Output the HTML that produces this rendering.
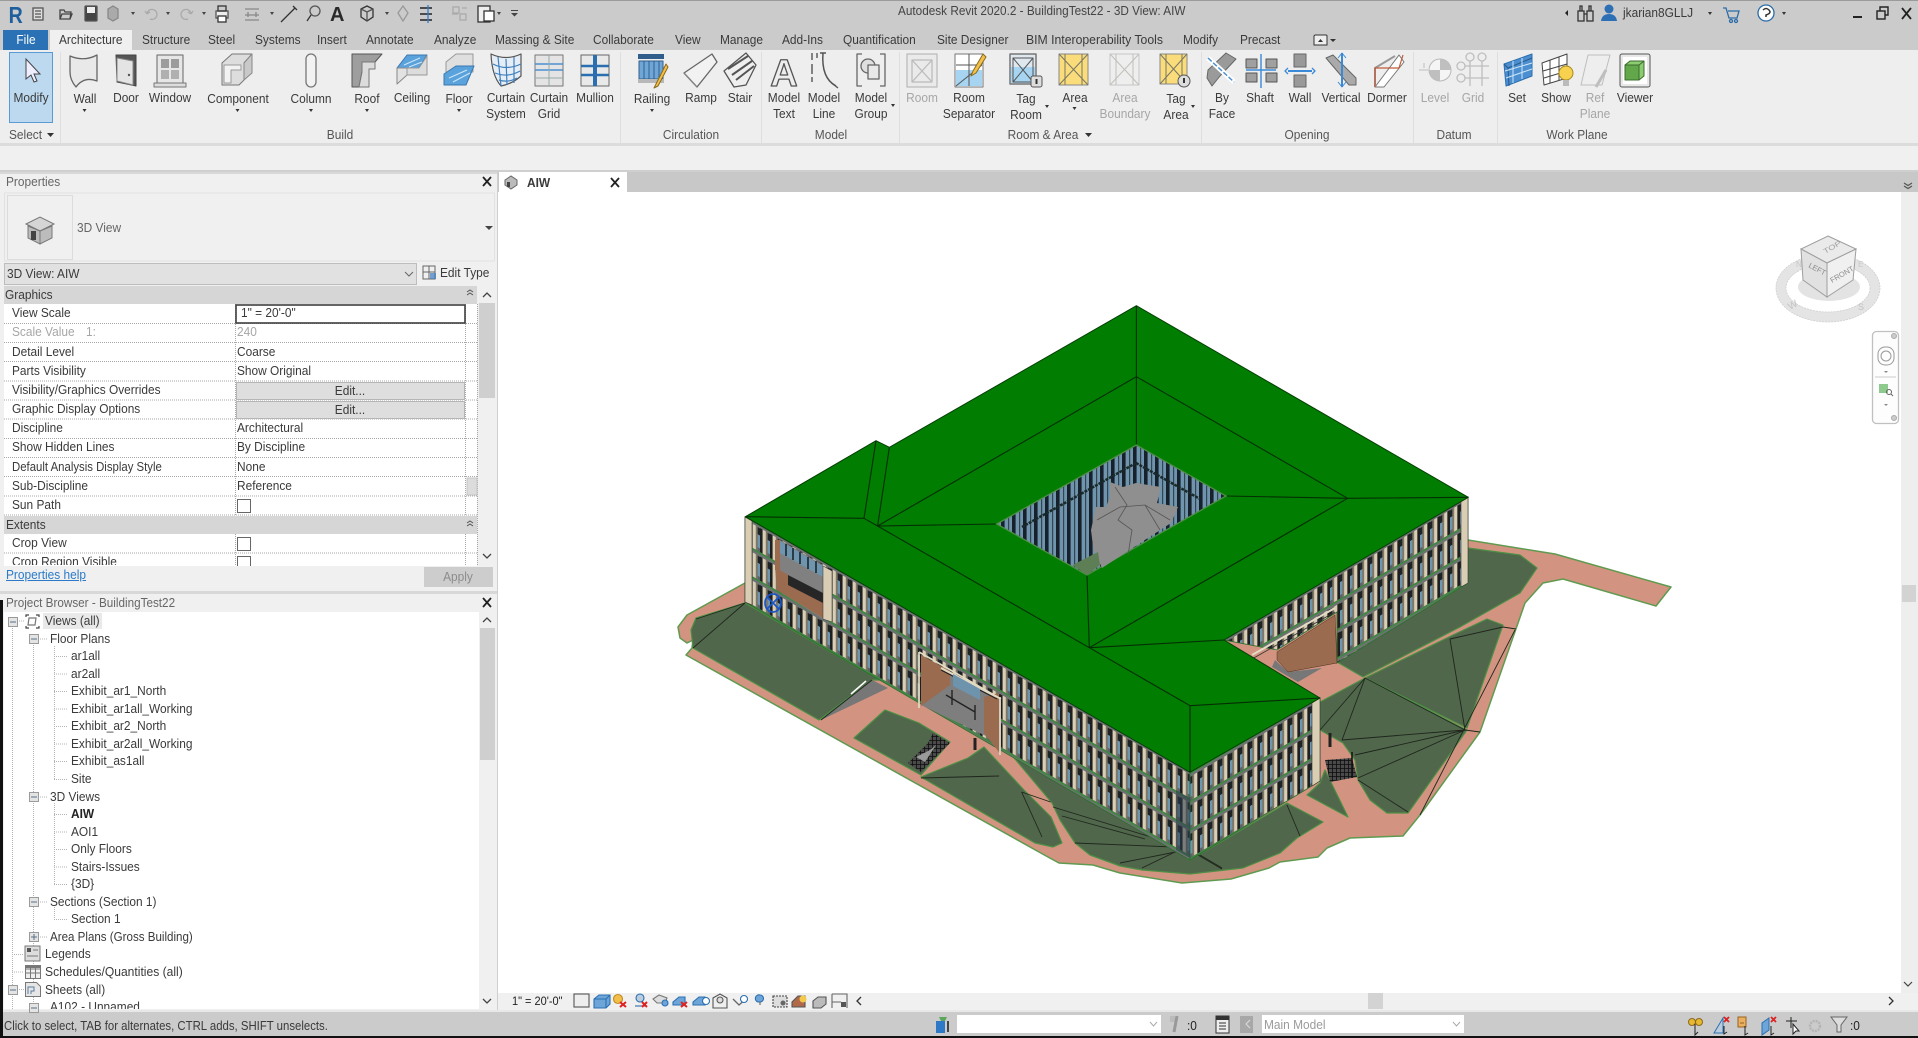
<!DOCTYPE html>
<html><head><meta charset="utf-8"><title>Autodesk Revit 2020.2 - BuildingTest22 - 3D View: AIW</title>
<style>
html,body{margin:0;padding:0;background:#fff;overflow:hidden}
#r{position:relative;width:1918px;height:1038px;overflow:hidden;font-family:"Liberation Sans",sans-serif;filter:blur(.3px)}
svg{position:absolute;left:0;top:0}
.t,.c{position:absolute;white-space:nowrap;font:13px/16px "Liberation Sans",sans-serif;color:#3a3a3a}
.t{transform:scaleX(.915);transform-origin:0 50%}
.c{transform:translateX(-50%) scaleX(.915)}
.g{color:#a6a6a6}
.clip{position:absolute;overflow:hidden;left:0}
</style></head><body><div id="r">
<svg width="1918" height="1038" viewBox="0 0 1918 1038" xmlns="http://www.w3.org/2000/svg">
<defs>
<pattern id="fa" patternUnits="userSpaceOnUse" width="10" height="28.5" patternTransform="translate(0,90.3) skewY(29.8)">
<rect width="10" height="28.5" fill="#5a646b"/><rect x="7.600" y="10" width="2.400" height="13" fill="#6d96b0"/><rect x="7.600" y="3" width="2.400" height="7" fill="#1d2428"/><rect x="0" y="2.500" width="2.600" height="24" fill="#1f1f1f"/><rect x="2.600" y="2.500" width="3.200" height="24" fill="#d9ceb4"/><rect x="5.800" y="2.500" width="1.800" height="24" fill="#7f7663"/><rect y="0" width="10" height="2.500" fill="#6f7273"/><rect y="26.800" width="10" height="1.700" fill="#3c8b3c"/>
</pattern>
<pattern id="fb" patternUnits="userSpaceOnUse" width="10" height="28.5" patternTransform="translate(0,1472.4) skewY(-30.4)">
<rect width="10" height="28.5" fill="#5a646b"/><rect x="0" y="10" width="2.400" height="13" fill="#6d96b0"/><rect x="0" y="3" width="2.400" height="7" fill="#1d2428"/><rect x="2.400" y="2.500" width="1.800" height="24" fill="#7f7663"/><rect x="4.200" y="2.500" width="3.200" height="24" fill="#d9ceb4"/><rect x="7.400" y="2.500" width="2.600" height="24" fill="#1f1f1f"/><rect y="0" width="10" height="2.500" fill="#6f7273"/><rect y="26.800" width="10" height="1.700" fill="#3c8b3c"/>
</pattern>
<pattern id="fc" patternUnits="userSpaceOnUse" width="10" height="28.5" patternTransform="translate(0,1358.3) skewY(-30.4)">
<rect width="10" height="28.5" fill="#5a646b"/><rect x="0" y="10" width="2.400" height="13" fill="#6d96b0"/><rect x="0" y="3" width="2.400" height="7" fill="#1d2428"/><rect x="2.400" y="2.500" width="1.800" height="24" fill="#7f7663"/><rect x="4.200" y="2.500" width="3.200" height="24" fill="#d9ceb4"/><rect x="7.400" y="2.500" width="2.600" height="24" fill="#1f1f1f"/><rect y="0" width="10" height="2.500" fill="#6f7273"/><rect y="26.800" width="10" height="1.700" fill="#3c8b3c"/>
</pattern>
<pattern id="gl" patternUnits="userSpaceOnUse" width="11" height="9">
<rect width="11" height="9" fill="#6f94ae"/><rect x="0" width="3.600" height="9" fill="#16212b"/><rect x="7" width="1.200" height="9" fill="#33454f"/>
</pattern>
<pattern id="ht" patternUnits="userSpaceOnUse" width="4" height="4"><rect width="4" height="4" fill="#4a4a4a"/><path d="M0 0H4M0 0V4" stroke="#0d0d0d" stroke-width="1.6"/></pattern>
</defs>

<!-- chrome backgrounds -->
<rect width="1918" height="1038" fill="#f0f0f0"/>
<rect width="1918" height="50" fill="#cbcbcb"/>
<rect width="1918" height="1" fill="#9b9b9b"/>
<rect x="3" y="30" width="45" height="20" fill="#2a72b5"/>
<rect x="50" y="30" width="82" height="20" fill="#f0f0f0"/>
<rect y="50" width="1918" height="93" fill="#eeeeee"/>
<rect y="143" width="1918" height="3" fill="#dcdcdc"/>
<rect y="146" width="1918" height="24" fill="#f0f0f0"/>
<rect y="170" width="1918" height="2" fill="#cfcfcf"/>
<g stroke="#dedede"><path d="M60.500 52V143M620.500 52V143M761.500 52V143M899.500 52V143M1201.500 52V143M1413.500 52V143M1497.500 52V143"/></g>
<!-- tab strip + viewport -->
<rect x="498" y="172" width="1420" height="20" fill="#c8c8c8"/>
<rect x="499" y="172" width="128" height="20" fill="#fff"/>
<rect x="498" y="192" width="1403" height="801" fill="#fff"/>
<rect x="1901" y="192" width="17" height="801" fill="#eeeeee"/>
<rect x="1902" y="585" width="14" height="17" fill="#d3d3d3"/>
<path d="M1904 186l4 2.500 4-2.500M1904 183l4 2.500 4-2.500" fill="none" stroke="#555" stroke-width="1.200"/><path d="M1904 982l4 4 4-4" fill="none" stroke="#444" stroke-width="1.200"/>
<rect x="498" y="993" width="1420" height="17" fill="#f0f0f0"/>
<rect x="1368" y="993" width="15" height="16" fill="#d3d3d3"/>
<path d="M861 997l-4 4 4 4M1889 997l4 4-4 4" fill="none" stroke="#333" stroke-width="1.300"/>
<rect y="1012" width="1918" height="24" fill="#cbcbcb"/>
<rect y="1010" width="1918" height="2" fill="#e8e8e8"/>
<rect y="1036" width="1918" height="2" fill="#111"/>
<rect x="957" y="1015" width="204" height="18" fill="#fff"/>
<rect x="1262" y="1015" width="202" height="18" fill="#fff"/>
<path d="M1150 1022l3.500 4 3.500-4M1453 1022l3.500 4 3.500-4" fill="none" stroke="#aaa"/>

<!-- properties panel -->
<rect x="0" y="172" width="498" height="838" fill="#f0f0f0"/>
<rect x="497" y="172" width="1" height="838" fill="#cfcfcf"/>
<rect x="0" y="172" width="497" height="2" fill="#d8d8d8"/>
<rect x="4.500" y="193" width="490" height="68" fill="#f0f0f0" stroke="#e2e2e2"/>
<rect x="7.500" y="195.500" width="65" height="64" fill="#f0f0f0" stroke="#dcdcdc"/>
<path d="M26 224l14-7 14 7v0l-2 2v12l-12 6-12-6v-12z" fill="#b5b5b5"/><path d="M26 224l14-7 14 7-14 7z" fill="#d5d5d5" stroke="#777"/><path d="M28 226v12l12 6v-13zM40 231v13l12-6v-12z" fill="#bcbcbc" stroke="#777"/><rect x="31" y="231" width="5" height="9" fill="#444"/>
<path d="M485 226h8l-4 4z" fill="#444"/>
<rect x="4.500" y="263.500" width="412" height="21" fill="#e1e1e1" stroke="#bdbdbd"/>
<path d="M405 272l4 4 4-4" fill="none" stroke="#666"/>
<g fill="none" stroke="#666"><rect x="423" y="266" width="12" height="13"/><path d="M429 266v13M423 272h12"/></g><rect x="430" y="273" width="6" height="6" fill="#3d7cc0" opacity=".7"/>
<rect x="4" y="304" width="473" height="262" fill="#fff"/>
<rect x="4" y="286" width="473" height="18" fill="#d6d6d6"/>
<rect x="4" y="516" width="473" height="18" fill="#d6d6d6"/>
<g stroke="#a8a8a8" stroke-dasharray="1 1" fill="none"><path d="M4 323.500H477M4 342.500H477M4 361.500H477M4 381H477M4 400H477M4 419H477M4 438.500H477M4 457.500H477M4 476.500H477M4 496H477M4 515H477M4 553H477"/><path d="M235.500 304V516M235.500 534V566M465.500 304V516M465.500 534V566M477.500 304V566"/></g>
<rect x="236" y="305" width="229" height="18" fill="#fff" stroke="#3f3f3f" stroke-width="1.600"/>
<rect x="236.500" y="382.500" width="228" height="17" fill="#dedede" stroke="#b5b5b5"/>
<rect x="236.500" y="401.500" width="228" height="17" fill="#dedede" stroke="#b5b5b5"/>
<rect x="467" y="478" width="10" height="17" fill="#dcdcdc" stroke="#c4c4c4"/>
<rect x="237.500" y="499.500" width="13" height="13" fill="#fff" stroke="#666"/>
<rect x="237.500" y="537.500" width="13" height="13" fill="#fff" stroke="#666"/>
<rect x="237.500" y="556.500" width="13" height="13" fill="#fff" stroke="#666"/>
<rect x="479" y="286" width="16" height="280" fill="#f0f0f0"/>
<rect x="479" y="303" width="16" height="95" fill="#cfcfcf"/>
<path d="M483 297l4-4 4 4M483 554l4 4 4-4" fill="none" stroke="#444" stroke-width="1.300"/>
<path d="M467 292l3-2 3 2M467 295l3-2 3 2" fill="none" stroke="#555"/>
<path d="M467 523l3-2 3 2M467 526l3-2 3 2" fill="none" stroke="#555"/>
<rect x="0" y="566" width="497" height="26" fill="#f0f0f0"/>
<rect x="424" y="567" width="69" height="20" fill="#cdcdcd"/>
<rect y="591" width="497" height="3" fill="#d8d8d8"/>
<path d="M483 177l8 9M491 177l-8 9M483 598l8 9M491 598l-8 9" stroke="#222" stroke-width="1.800"/>
<path d="M611 178l8 9M619 178l-8 9" stroke="#222" stroke-width="1.800"/>
<g transform="translate(511,182)"><path d="M-6-2l6-4 6 4v5l-6 4-6-4z" fill="#bbb" stroke="#666"/><rect x="-4" y="0" width="3" height="5" fill="#444"/></g>

<!-- project browser -->
<rect x="4" y="612" width="475" height="397" fill="#fff"/>
<rect x="0" y="600" width="3" height="438" fill="#111"/>
<rect x="43" y="613" width="59" height="16" fill="#e9e9e9"/>
<rect x="480" y="612" width="15" height="397" fill="#f0f0f0"/>
<rect x="480" y="628" width="15" height="132" fill="#cfcfcf"/>
<path d="M483 622l4-4 4 4M483 999l4 4 4-4" fill="none" stroke="#444" stroke-width="1.300"/>
<g stroke="#b4b4b4" stroke-dasharray="1 1" fill="none">
<path d="M12.500 626V1009M33.500 643V1009M54.500 646V779.500M54.500 803V884.500M54.500 907V919.500"/>
<path d="M54 656.500H68M54 674H68M54 691.500H68M54 709H68M54 726.500H68M54 744H68M54 761.500H68M54 779.500H68M54 814.500H68M54 832H68M54 849.500H68M54 867H68M54 884.500H68M54 919.500H68"/>
<path d="M38 639H48M38 797H48M38 902H48M38 937H48M12 954.500H24M12 972H24M17 621H24M17 989.500H24"/>
</g>
<g fill="#e4e4e4" stroke="#9a9a9a"><rect x="8.500" y="617.500" width="9" height="9"/><rect x="29.500" y="634.500" width="9" height="9"/><rect x="29.500" y="792.500" width="9" height="9"/><rect x="29.500" y="897.500" width="9" height="9"/><rect x="29.500" y="932.500" width="9" height="9"/><rect x="8.500" y="985.500" width="9" height="9"/><rect x="29.500" y="1003.500" width="9" height="9"/></g>
<path d="M10 622h6M31 639h6M31 797h6M31 902h6M31 937h6M34 934v6M10 990h6M31 1008h6" stroke="#5a6f8a"/>
<g fill="none" stroke="#444" stroke-width="1.200"><path d="M26 617v-2h3M36 615h3v2M39 626v2h-3M29 628h-3v-2"/><path d="M29 618h7l-1 7h-7z" stroke="#777"/></g>
<g><rect x="25" y="946" width="15" height="15" fill="#ddd" stroke="#777"/><rect x="27" y="948" width="4" height="4" fill="#555"/><path d="M33 950h5M27 956h11" stroke="#777"/></g>
<g fill="none" stroke="#777"><rect x="25.500" y="965.500" width="15" height="13" fill="#eee"/><path d="M25 969h15M25 973h15M30.500 966v13M35.500 966v13"/></g><rect x="25" y="965" width="16" height="3" fill="#777"/>
<g fill="#e6e6e6" stroke="#777"><path d="M25.500 982.500h11l4 4v10h-15z"/><path d="M28 994v-7h6v4h-3v3" fill="none" stroke="#5a7ca0"/></g>

<!-- ===== MODEL ===== -->
<polygon points="745,583 687,615 678,627 680,638 687,643 693,640 692,648 686,655 1048,857 1059,863 1093,865 1120,873 1182,883 1231,879 1269,868 1280,862 1318,857 1327,848 1350,838 1403,836 1420,815 1480,732 1525,603 1543,583 1563,579 1656,606 1671,587 1555,554 1468,540 1200,600" fill="#d29480" stroke="#5f9a50" stroke-width="1.500" stroke-linejoin="round"/>
<g fill="#50674b" stroke="#4d8f45" stroke-width="1.200" stroke-linejoin="round">
<polygon points="745,603 696,618 691,630 693,648 819,720 872,680 880,680"/>
<polygon points="885,710 919,723 950,742 921,775 854,738"/>
<polygon points="984,747 968,758 921,777 1035,843 1053,847 1062,843 1051,817 1024,790"/>
<polygon points="999,740 1190,860 1287,803 1323,822 1297,838 1280,853 1243,868 1190,874 1142,870 1120,866 1090,855 1075,843 1060,820 1052,803"/>
<polygon points="1307,795 1348,817 1325,770 1320,783"/>
<polygon points="1468,548 1520,555 1537,568 1520,593 1460,627 1363,677 1337,662 1468,583"/>
<polygon points="1365,678 1453,635 1487,619 1503,625 1467,728"/>
<polygon points="1365,678 1467,730 1408,813 1387,813 1370,800 1358,780 1355,760 1343,743 1320,730 1320,702"/>
</g>
<g fill="none" stroke="#1f261d" stroke-width=".9">
<path d="M745 603L696 619M745 603L693 648M921 778L999 776M1021.600 792L1042 837M1021.600 792L1050.600 802M1053 807L1151 837M1062 816L1145 839M1075 843L1173 847M1120 863L1175.600 852M1142 868L1173 853M1198 855L1222 869"/>
<path d="M1365 678L1465 730M1365 678L1320 730M1365 678L1342 740M1342 740L1465 730M1355 755L1465 730M1358 778L1465 730M1358 780L1408 812M1450 639L1465 730M1450 639L1503 627M1420 815L1515 630M1287 805L1300 836M1465 730L1480 732M1200 855L1222 868M1503 627L1516 629"/>
</g>
<polygon points="872,680 821,720 888,688" fill="#777"/>
<path d="M866 681L851 694" stroke="#fff" stroke-width="1.500"/>
<path d="M821 720L872 680" stroke="#1f261d"/>
<!-- stairs -->
<polygon points="908,763 921,772 950,743 933,733 928,743" fill="url(#ht)"/>
<polygon points="916,757 930,750 936,745 925,762" fill="#9a9a9a"/>
<polygon points="1325,760 1352,758 1357,777 1330,782" fill="url(#ht)"/>
<path d="M1352 752v26" stroke="#111" stroke-width="1.500"/>
<path d="M975 738v12M1330 733v14" stroke="#222" stroke-width="3"/>
<!-- facades -->
<polygon points="745,517 1190,772 1190,860 745,602" fill="url(#fa)" stroke="#2c6e2c" stroke-width=".8"/>
<polygon points="1190,772 1320,698 1320,781 1190,860" fill="url(#fb)" stroke="#2c6e2c" stroke-width=".8"/>
<polygon points="1224,640 1468,497 1468,583 1337,663 1337,612 1277,650" fill="url(#fc)" stroke="#2c6e2c" stroke-width=".8"/>
<polygon points="1461,501 1468,497 1468,583 1461,587" fill="#d9ceb4" stroke="#333" stroke-width=".6"/>
<polygon points="1312,703 1320,698 1320,781 1312,786" fill="#d9ceb4" stroke="#333" stroke-width=".6"/>
<polygon points="745,517 752,521 752,605 745,602" fill="#d9ceb4" stroke="#333" stroke-width=".6"/>
<!-- darker glass at corner -->
<polygon points="1176,790 1190,798 1190,858 1176,850" fill="#2b3d4a" opacity=".55"/>
<!-- left recess -->
<polygon points="780,540 823,565 823,619 780,592" fill="#808080"/>
<polygon points="780,541 823,566 823,577 780,553" fill="#6f94ae"/>
<path d="M786 544v12M793 548v12M800 552v12M808 557v12M816 561v12" stroke="#1c262c" stroke-width="1.600"/>
<polygon points="775,567 788,575 788,585 777,590" fill="#9b6b4f"/>
<polygon points="777,590 788,585 823,600 823,618" fill="#9b6b4f"/>
<polygon points="788,575 823,593 823,603 788,585" fill="#262626"/>
<rect x="775" y="540" width="5" height="30" fill="#9b6b4f"/>
<polygon points="823,566 832,571 832,622 823,619" fill="#d9ceb4" stroke="#333" stroke-width=".5"/>
<g fill="none" stroke="#1a55c8" stroke-width="1.700"><ellipse cx="773" cy="603" rx="8" ry="9"/><path d="M767 597l12 12M779 597l-12 12"/></g>
<!-- left door -->
<polygon points="921,655 1001,700 1001,755 988,737 921,705" fill="#7e7e7e"/>
<polygon points="921,655 950,671 950,685 921,706" fill="#9b6b4f"/>
<polygon points="984,697 999,693 999,752 984,733" fill="#9b6b4f"/>
<path d="M919 652L1001 699M919 652V708M1000 697V755" stroke="#e2dac3" stroke-width="1.700" fill="none"/>
<path d="M941 668L997 697" stroke="#e2dac3" stroke-width="2"/><path d="M941 670L997 699" stroke="#222" stroke-width="1"/>
<path d="M952 690V705M975 705V720M946 695L975 712" stroke="#222" stroke-width="1.400"/>
<polygon points="953,674 980,689 980,700 953,686" fill="#6e93ac"/>
<!-- upper right door -->
<polygon points="1272,667 1298,682 1322,668 1288,672 1275,660" fill="#777"/>
<polygon points="1277,652 1335,615 1337,663 1288,672 1277,660" fill="#9b6b4f" stroke="#4a3020" stroke-width=".5"/>
<path d="M1252 655L1335 608" stroke="#e2dac3" stroke-width="2"/>
<path d="M1252 659L1335 612" stroke="#333" stroke-width=".8"/>
<!-- roof -->
<polygon points="745.400,516.700 876,440.700 889.400,447.300 1136.400,305.700 1468.300,497.300 1224,640 1320,698 1190,772.300" fill="#017d01" stroke="#063f06" stroke-width="1" stroke-linejoin="round"/>
<g fill="none" stroke="#042e04" stroke-width="1.100">
<path d="M1136.400 305.700V445M1136.400 376.700L877.600 526M1136.400 376.700L1347.700 498.300M745.400 516.700L864 518.300L876 440.700M864 518.300L877.600 526L889.400 447.300M877.600 526L996.700 524M877.600 526L1089.300 647.700M1087 575L1089.300 647.700M1224 640L1089.300 647.700M1089.300 647.700L1190 705.700V772.300M1190 705.700L1320 698M1226 496L1347.700 498.300L1468.300 497.300M1347.700 498.300L1089.300 647.700"/>
</g>
<!-- courtyard -->
<polygon points="1136.400,445 1226,496 1087,575 996.700,524" fill="url(#gl)" stroke="#4d8f45" stroke-width="1.300"/>
<path d="M1136 463L1022 527M1136 463L1200 499" stroke="#1a2a2a" stroke-width="2.500" stroke-dasharray="3 1"/>
<polygon points="1110,482 1123,487 1136,483 1161,487 1157,503 1178,507 1171,523 1102,568 1093.500,550 1091,530 1096,507 1106,507 1110,497" fill="#8f8f8f"/>
<path d="M1115 487L1127 505L1118 520L1132 530L1128 555M1097 520L1120 507L1145 505L1170 520M1145 505L1160 530" fill="none" stroke="#555" stroke-width=".8"/>
<polygon points="1072.500,565 1098,552 1100,565 1087,575" fill="#5e7e56"/>

<!-- viewcube -->
<g>
<ellipse cx="1828" cy="288" rx="47" ry="29" fill="none" stroke="#e4e4e4" stroke-width="10"/>
<ellipse cx="1828" cy="288" rx="52" ry="34" fill="none" stroke="#cfcfcf" stroke-width=".8" stroke-dasharray="2 1"/>
<ellipse cx="1828" cy="288" rx="42" ry="24" fill="none" stroke="#cfcfcf" stroke-width=".8" stroke-dasharray="2 1"/>
<ellipse cx="1829" cy="287" rx="31" ry="14" fill="#d7d7d7" opacity=".7"/>
<polygon points="1828,236 1856,249 1827,263 1801,249" fill="#eaeaea" stroke="#9e9e9e"/>
<polygon points="1801,249 1827,263 1827,297 1803,280" fill="#e1e1e1" stroke="#9e9e9e"/>
<polygon points="1856,249 1827,263 1827,297 1853,280" fill="#f0f0f0" stroke="#9e9e9e"/>
<text x="0" y="0" transform="translate(1825,254) rotate(-30) scale(.95,.7)" font-family="Liberation Sans" font-size="10" fill="#a0a0a0">TOP</text>
<text x="0" y="0" transform="translate(1808,267) rotate(28)" font-family="Liberation Sans" font-size="7.500" fill="#8a8a8a">LEFT</text>
<text x="0" y="0" transform="translate(1832,283) rotate(-30)" font-family="Liberation Sans" font-size="7.500" fill="#8a8a8a">FRONT</text>
<text x="0" y="0" transform="translate(1790,310) rotate(-28)" font-family="Liberation Sans" font-size="10" fill="#c2c2c2">W</text>
<text x="1858" y="310" font-family="Liberation Sans" font-size="9" fill="#c2c2c2">S</text>
<text x="1796" y="267" font-family="Liberation Sans" font-size="8" fill="#c8c8c8">N</text>
<text x="1858" y="267" font-family="Liberation Sans" font-size="8" fill="#c8c8c8">E</text>
</g>
<rect x="1872.500" y="331.500" width="26" height="92" rx="4" fill="#fdfdfd" stroke="#c0c0c0" stroke-width="1.300"/>
<circle cx="1894" cy="336" r="2.500" fill="#ccc" stroke="#aaa"/><circle cx="1894" cy="418" r="2.500" fill="#ccc" stroke="#aaa"/>
<rect x="1878" y="347" width="16" height="18" rx="7" fill="none" stroke="#999"/><circle cx="1886" cy="356" r="5" fill="none" stroke="#999"/>
<path d="M1884 371h4l-2 2zM1884 404h4l-2 2z" fill="#888"/><path d="M1875 377h21" stroke="#ccc"/>
<rect x="1879" y="384" width="9" height="9" fill="#8ec98e"/><circle cx="1889" cy="392" r="2.500" fill="none" stroke="#666"/><path d="M1891 394l2 2" stroke="#666"/>

<!-- QAT -->
<g fill="none" stroke="#555" stroke-width="1.300">
<rect x="33" y="8" width="10" height="12" fill="#ddd"/><path d="M35 11h6M35 14h6M35 17h6"/>
<path d="M60 19V10h4l1 2h6l-1 7zM60 19l2-5h10l-2 5" stroke="#444"/>
<rect x="85" y="6" width="12" height="15" rx="1" fill="#444"/><rect x="87" y="7" width="8" height="6" fill="#eee" stroke="none"/>
<path d="M108 9l5-3 5 3v9l-5 3-5-3z" fill="#aaa" stroke="#888"/>
<path d="M147 14a5 5 0 1 1 3 5M147 14l-2-3M147 14l3-2" stroke="#aaa"/>
<path d="M191 14a5 5 0 1 0-3 5M191 14l2-3M191 14l-3-2" stroke="#aaa"/>
<rect x="216" y="11" width="12" height="7" fill="#eee"/><rect x="218" y="6" width="8" height="5" stroke="#333"/><rect x="218" y="16" width="8" height="6" fill="#fff" stroke="#333"/>
<path d="M245 9h14M245 20h14M248 12v5M256 12v5M245 15h14" stroke="#888"/>
<path d="M283 20l12-12M281 22l4-4M293 6l4 4" stroke="#333"/>
<circle cx="315" cy="11" r="5"/><path d="M311 15l-4 6" stroke="#333"/>
<path d="M361 9l6-3 6 3v8l-6 4-6-4z" fill="#ccc" stroke="#333"/><path d="M361 9l6 3 6-3M367 12v9"/>
<path d="M403 6l5 7-5 8-5-8z" stroke="#999"/>
<path d="M420 8h12M420 14h12M420 20h12" stroke="#222" stroke-width="1.600"/><path d="M428 5v18" stroke="#2f7dd0"/>
<rect x="453" y="7" width="6" height="6" fill="#ccc" stroke="#aaa"/><rect x="460" y="14" width="6" height="6" fill="#ccc" stroke="#aaa"/><path d="M452 14h6M462 8h5" stroke="#aaa"/>
<rect x="478" y="6" width="12" height="16" fill="#eee" stroke="#333"/><rect x="484" y="11" width="10" height="10" fill="#fff" stroke="#333"/>
</g>
<g fill="#444"><path d="M131 12h4l-2 3zM166 12h4l-2 3zM202 12h4l-2 3zM270 12h4l-2 3zM385 12h4l-2 3zM497 12h4l-2 3z"/><path d="M511 10h7v1h-7zM511 13h7l-3.500 3.500z"/></g>
<text x="9" y="23" font-family="Liberation Sans" font-weight="bold" font-size="23" fill="#1e5f9e" transform="translate(1,0) scale(.85,1)">R</text>
<text x="330" y="21" font-family="Liberation Sans" font-weight="bold" font-size="20" fill="#2a2a2a">A</text>
<path d="M1315 35h11a1 1 0 0 1 1 1v9h-13v-9z" fill="#eee" stroke="#333"/><path d="M1318 42l2.500-3 2.500 3z" fill="#333"/><path d="M1330 39h6l-3 3z" fill="#333"/>
<!-- right title -->
<path d="M1568 10v6l-3-3z" fill="#222"/>
<g fill="none" stroke="#333" stroke-width="1.300"><rect x="1578" y="11" width="6" height="10"/><rect x="1587" y="11" width="6" height="10"/><path d="M1580 11V6h2v5M1589 11V6h2v5M1584 14h3"/></g>
<circle cx="1609" cy="9" r="4.500" fill="#2d6fb5"/><path d="M1601 21q1-7 8-7t8 7z" fill="#2d6fb5"/>
<path d="M1708 12h4l-2 3zM1782 12h4l-2 3z" fill="#333"/>
<g fill="none" stroke="#2a6ba8" stroke-width="1.300"><path d="M1723 8h3l3 10h8l2-7h-11"/><circle cx="1731" cy="21" r="1.500"/><circle cx="1736" cy="21" r="1.500"/></g>
<circle cx="1766" cy="13" r="8" fill="#fff" stroke="#2a6ba8" stroke-width="1.300"/><path d="M1763 10q3-3 6 0t-3 5v2" fill="none" stroke="#333" stroke-width="1.500"/>
<path d="M1853 17h9" stroke="#222" stroke-width="2"/>
<g fill="none" stroke="#222" stroke-width="1.400"><rect x="1877" y="11" width="8" height="8" fill="#ccc"/><path d="M1880 11V7h8v8h-3"/></g>
<path d="M1902 8l9 11M1911 8l-9 11" stroke="#222" stroke-width="1.800"/>

<!-- ribbon icons -->
<rect x="9.500" y="52.500" width="43" height="70" fill="#bcd9f0" stroke="#5a9bd5"/>
<path d="M26 59v20l5-4 3 7 3-1-3-7h6z" fill="#eef" stroke="#444"/>
<g stroke-linejoin="round">
<g transform="translate(84,70)"><path d="M-14-14Q0-8 13-15V11Q0 6-8 17Q-14 10-14 2Z" fill="#e9e9e9" stroke="#666" stroke-width="1.300"/></g>
<g transform="translate(126,70)"><path d="M-10-15H10V16L-9 12Z" fill="#555" stroke="#444"/><path d="M-9-12L7-9V15L-9 11Z" fill="#e4e4e4" stroke="#888"/><circle cx="3" cy="5" r="1.200" fill="#555"/></g>
<g transform="translate(170,70)"><rect x="-13" y="-15" width="26" height="28" fill="#e6e6e6" stroke="#666"/><rect x="-9" y="-11" width="8" height="9" fill="#9c9c9c"/><rect x="1" y="-11" width="8" height="9" fill="#9c9c9c"/><rect x="-9" y="0" width="8" height="9" fill="#b0b0b0"/><rect x="1" y="0" width="8" height="9" fill="#b0b0b0"/><rect x="-16" y="13" width="32" height="4" fill="#ddd" stroke="#777"/></g>
<g transform="translate(237,70)"><path d="M-15-7L-5-16H15L7-7V10L2 15H-15Z" fill="#ddd" stroke="#777"/><path d="M-13-5H4V0H-6V13H-13Z" fill="#f2f2f2" stroke="#999"/><path d="M7-7L15-16V3L7 10Z" fill="#c9c9c9" stroke="#888"/></g>
<g transform="translate(311,70)"><rect x="-5" y="-16" width="10" height="33" rx="5" fill="#f2f2f2" stroke="#777" stroke-width="1.300"/></g>
<g transform="translate(367,70)"><path d="M-15-16H15L8-8H-5V2L-8 17H-15Z" fill="#9e9e9e" stroke="#555"/><path d="M-5-8H8V-1H2V17H-8L-5 2Z" fill="#dcdcdc" stroke="#777"/></g>
<g transform="translate(412,70)"><path d="M-15-2L-5-15H15L7-2Z" fill="#5aa2dc" stroke="#3a78b0"/><path d="M-15-2V14L-5 5V-2Z" fill="#e2e2e2" stroke="#888"/><path d="M-5-2V5L15 5V-14L7-2Z" fill="#dcdcdc" stroke="#999"/><path d="M-8-5L8-12M-3-3L10-8" stroke="#cfe6f8"/></g>
<g transform="translate(459,70)"><path d="M-13-8L-3-16H14V2L-13 2Z" fill="#dfdfdf" stroke="#999"/><path d="M-15 4L-3-4H15L7 15H-15Z" fill="#5aa2dc" stroke="#3a78b0"/><path d="M-10 8L8 0M-6 12L11 3" stroke="#cfe6f8"/></g>
<g transform="translate(506,70)" fill="none" stroke="#3f7fbd" stroke-width="1.200"><path d="M-15-16Q0-9 15-16V6Q6 14-5 16Q-14 6-15-16Z" fill="#e5eef6" stroke="#555"/><path d="M-13-6Q0 1 15-6M-11 3Q2 8 14 1M-7 10Q2 13 11 8M-8-13L-5 16M0-11L1 15M8-13L8 13"/></g>
<g transform="translate(549,70)" fill="none"><rect x="-14" y="-15" width="28" height="31" fill="#e4e4e4" stroke="#777"/><path d="M-14-6H14M-14 0H14" stroke="#4a90d0" stroke-width="1.500"/><path d="M0-15V16M-14 8H14" stroke="#9aa"/></g>
<g transform="translate(595,70)"><rect x="-14" y="-15" width="28" height="31" fill="#e9e9e9" stroke="#666"/><path d="M0-15V16" stroke="#2b6fb0" stroke-width="4"/><path d="M-14-4H14M-14 5H14" stroke="#2b6fb0" stroke-width="2.500"/></g>
<g transform="translate(652,70)"><rect x="-14" y="-16" width="26" height="5" fill="#315d8c"/><rect x="-13" y="-9" width="24" height="18" fill="#6fa6d8" stroke="#315d8c"/><path d="M-8-9V9M-3-9V9M2-9V9M7-9V9" stroke="#315d8c"/><rect x="-14" y="9" width="26" height="4" fill="#b8b8b8"/><path d="M14-6L4 14L2 18L6 16L16-3Z" fill="#f3c04a" stroke="#8a6a1e"/></g>
<g transform="translate(700,70)"><path d="M12-16L17-8L-3 17L-16 3Z" fill="#f2f2f2" stroke="#666" stroke-width="1.300"/><path d="M-16 3L-13 6L-3 17" fill="none" stroke="#888"/></g>
<g transform="translate(740,70)"><path d="M6-17L16-5L6 15L-6 17L-16 1Z" fill="#efefef" stroke="#555" stroke-width="1.300"/><path d="M-12-1L8-14M-8 5L12-9M-4 10L14-4" stroke="#555" stroke-width="2"/></g>
<text x="784" y="86" text-anchor="middle" font-family="Liberation Sans" font-weight="bold" font-size="38" fill="#eee" stroke="#555" stroke-width="1.300">A</text>
<g transform="translate(824,70)" fill="none" stroke="#555" stroke-width="1.400"><path d="M-12-17V-10M-12-6V4M-12 7V12M-7-17V-12"/><path d="M-1-17Q-3 8 12 16" stroke-width="1.500"/><path d="M-4-17H2M9 14l5 4"/></g>
<g transform="translate(871,70)" fill="none" stroke="#666" stroke-width="1.300"><path d="M-9-16H-14V16H-9M9-16H14V16H9"/><circle cx="-3" cy="-4" r="7" fill="#dfdfdf"/><rect x="-3" y="-5" width="11" height="14" fill="#e9e9e9"/></g>
<g transform="translate(922,70)" opacity=".42" fill="none" stroke="#777" stroke-width="1.300"><rect x="-15" y="-16" width="30" height="33" fill="#e5e5e5"/><rect x="-10" y="-10" width="20" height="22"/><path d="M-10-10L10 12M10-10L-10 12"/></g>
<g transform="translate(969,70)"><rect x="-14" y="-16" width="28" height="33" fill="#fff" stroke="#777"/><rect x="-13" y="0" width="26" height="16" fill="#a7d4f0"/><path d="M-13-5H13M0-16V16M-13 16L13-5" stroke="#555" fill="none"/><path d="M14-16L4 1L2 6L7 3L17-13Z" fill="#f3c04a" stroke="#8a6a1e"/></g>
<g transform="translate(1025,70)"><rect x="-15" y="-16" width="26" height="30" fill="#dfe8ee" stroke="#777" stroke-width="1.500"/><rect x="-14" y="-3" width="24" height="16" fill="#a7d4f0"/><path d="M-12-12L8 12M8-12L-12 12M-12-12H8V12H-12Z" stroke="#555" fill="none"/><rect x="6" y="6" width="11" height="11" rx="2" fill="#ddd" stroke="#555"/><path d="M11.500 9v5" stroke="#333" stroke-width="2"/></g>
<g transform="translate(1074,70)"><rect x="-15" y="-16" width="29" height="31" fill="#fbdc7b" stroke="#888"/><path d="M-15-16L14 15M14-16L-15 15M-9-16V15M8-16V15" stroke="#776" fill="none"/></g>
<g transform="translate(1125,70)" opacity=".38"><rect x="-15" y="-16" width="29" height="31" fill="#eee" stroke="#888"/><path d="M-15-16L14 15M14-16L-15 15M-9-16V15M8-16V15" stroke="#776" fill="none"/></g>
<g transform="translate(1175,70)"><rect x="-15" y="-16" width="27" height="30" fill="#fbdc7b" stroke="#888"/><path d="M-15-16L12 14M12-16L-15 14M-9-16V14M7-16V14" stroke="#776" fill="none"/><circle cx="9" cy="11" r="6" fill="#ddd" stroke="#555"/><path d="M9 8v5" stroke="#333" stroke-width="2"/></g>
<g transform="translate(1222,70)"><path d="M-14 0L4-17L14-11L-2 6L-10 16L-15 8Z" fill="#9a9a9a" stroke="#666"/><path d="M-14-12L12 12" stroke="#fff" stroke-width="5"/><path d="M-14-12L12 12" stroke="#4a90d0" stroke-width="1.500" stroke-dasharray="5 2"/></g>
<g transform="translate(1261,70)"><rect x="-15" y="-11" width="11" height="9" fill="#a0a0a0" stroke="#555"/><rect x="5" y="-11" width="11" height="9" fill="#a0a0a0" stroke="#555"/><rect x="-15" y="3" width="11" height="9" fill="#a0a0a0" stroke="#555"/><rect x="5" y="3" width="11" height="9" fill="#a0a0a0" stroke="#555"/><path d="M0-16V18M-15 0H15" stroke="#3a8ad8" stroke-width="1.400"/></g>
<g transform="translate(1300,70)"><rect x="-6" y="-16" width="12" height="13" fill="#999" stroke="#666"/><rect x="-6" y="5" width="12" height="12" fill="#999" stroke="#666"/><path d="M-12 1H12" stroke="#3a8ad8" stroke-width="2"/><path d="M-12-2l-3 3 3 3M12-2l3 3-3 3" fill="none" stroke="#3a8ad8" stroke-width="1.300"/></g>
<g transform="translate(1341,70)"><path d="M-15-12L-8-15L15 8V15L8 15Z" fill="#aaa" stroke="#666"/><path d="M1-17V17" stroke="#3a8ad8" stroke-width="2"/><path d="M-3-12l4-5 4 5M-3 12l4 5 4-5" fill="none" stroke="#3a8ad8"/></g>
<g transform="translate(1387,70)"><path d="M-12 17L12-15L17-8L-3 17Z" fill="#fff" stroke="#777"/><path d="M-12 17L-12-2L8-14" fill="none" stroke="#999" stroke-width="2"/><path d="M-12 17V-2H12L16-15" fill="none" stroke="#c05a3a" stroke-width="1.200"/></g>
<g transform="translate(1436,70)" opacity=".45"><circle cx="4" cy="0" r="11" fill="#fff" stroke="#777"/><path d="M4-11A11 11 0 0 1 15 0H4V11A11 11 0 0 1-7 0H4Z" fill="#888"/><path d="M-17 0H-8" stroke="#888"/><path d="M-12-7V-2" stroke="#888"/></g>
<g transform="translate(1474,70)" opacity=".4" fill="none" stroke="#777" stroke-width="1.300"><circle cx="-4" cy="-13" r="4"/><circle cx="8" cy="-13" r="4"/><circle cx="-13" cy="-4" r="4"/><circle cx="-13" cy="8" r="4"/><path d="M-4-9V16M8-9V16M-9-4H15M-9 8H15"/></g>
<g transform="translate(1518,70)"><path d="M-14-6L14-16V6L-12 16Z" fill="#4b8fd0" stroke="#2b6fb0"/><path d="M-14-6L-10-2L14-12M-9 16L-10-2" stroke="#26598a" fill="none"/><path d="M-5-9V13M4-12V9M-13 1L14-7M-12 8L14-1" stroke="#cfe6f8" fill="none"/></g>
<g transform="translate(1557,70)"><path d="M-15-7L10-16V8L-13 15Z" fill="#fff" stroke="#444"/><path d="M-7-10V13M2-13V10M-14 1L10-6M-13 8L10 1" stroke="#444" fill="none"/><circle cx="9" cy="3" r="7" fill="#f8d24e" stroke="#a88820"/><rect x="6" y="10" width="6" height="6" fill="#bbb"/></g>
<g transform="translate(1596,70)" opacity=".4"><path d="M-8-15H14L6 15H-15Z" fill="#eee" stroke="#777"/><path d="M10 0L0 17" stroke="#777" stroke-width="3"/></g>
<g transform="translate(1635,70)"><rect x="-15" y="-16" width="30" height="33" rx="2" fill="#e8e8e8" stroke="#555"/><rect x="-12" y="-13" width="24" height="27" fill="#fff"/><rect x="-10" y="-5" width="14" height="15" fill="#62a84a" stroke="#3a6c2c"/><path d="M-10-5L-5-9H9L4-5ZM4-5L9-9V6L4 10Z" fill="#8ccb70" stroke="#3a6c2c"/></g>
<!-- ribbon dropdown arrows -->
<path d="M82.500 109h4l-2 3zM235.500 109h4l-2 3zM309 109h4l-2 3zM365 109h4l-2 3zM457 109h4l-2 3zM650 109h4l-2 3zM891 104h4l-2 3zM1045 105h4l-2 3zM1072.500 107h4l-2 3zM1191 105h4l-2 3z" fill="#333"/>
<path d="M47 133h7l-3.500 4zM1085 133h7l-3.500 4z" fill="#333"/>
</g>

<!-- view control icons -->
<g stroke-width="1.100">
<rect x="574" y="994" width="15" height="13" fill="#eee" stroke="#555"/>
<path d="M594 999l5-4h11v9l-4 4h-12z" fill="#6ea5d8" stroke="#2b6fb0"/><path d="M594 999h12v9M606 999l4-4" fill="none" stroke="#2b6fb0"/>
<circle cx="618" cy="999" r="4.500" fill="#f2c04a" stroke="#c48a20"/><path d="M620 1002l6 5M626 1002l-6 5" stroke="#d22" stroke-width="2"/>
<circle cx="640" cy="998" r="4" fill="#bcd" stroke="#2b6fb0"/><path d="M635 1006h10" stroke="#2b6fb0"/><path d="M642 1002l5 5M647 1002l-5 5" stroke="#d22" stroke-width="2"/>
<path d="M653 999l6-4 8 3-2 5h-8z" fill="#ddd" stroke="#777"/><circle cx="665" cy="1003" r="3" fill="#6ea5d8" stroke="#2b6fb0"/>
<path d="M673 1002l6-5h6v8h-12z" fill="#6ea5d8" stroke="#2b6fb0"/><path d="M681 1002l6 5M687 1002l-6 5" stroke="#d22" stroke-width="2"/>
<path d="M693 1002l6-5h6v8h-12z" fill="#6ea5d8" stroke="#2b6fb0"/><circle cx="706" cy="1001" r="3.500" fill="#fff" stroke="#2b6fb0"/>
<path d="M713 1003v-5l7-4 7 4v10h-14z" fill="#eee" stroke="#555"/><circle cx="720" cy="1000" r="3" fill="#ddd" stroke="#555"/>
<path d="M733 999l6 6 8-7" fill="none" stroke="#666" stroke-width="1.300"/><circle cx="744" cy="999" r="3.500" fill="#fff" stroke="#2b6fb0"/>
<path d="M760 995a3.500 3.500 0 0 1 0 7l-2 0a3.500 3.500 0 0 1 2-7z" fill="#6ea5d8" stroke="#2b6fb0"/><path d="M760 1002v3" stroke="#666"/>
<rect x="773" y="996" width="14" height="11" fill="#ddd" stroke="#444" stroke-dasharray="2 1"/><circle cx="783" cy="1003" r="2.500" fill="#666"/>
<path d="M792 1002l6-6h7v11h-13z" fill="#b06a4a" stroke="#555"/><circle cx="803" cy="999" r="3.500" fill="#f2c94a"/>
<path d="M813 1001l5-4h8v7l-5 4h-8z" fill="#bbb" stroke="#555"/>
<path d="M832 994h15v14M832 994v14M832 1002h9" fill="none" stroke="#666"/><rect x="841" y="1002" width="5" height="5" fill="#555"/>
</g>
<!-- status icons -->
<g>
<rect x="936" y="1021" width="9" height="12" fill="#2d79c7"/><path d="M939 1017h8l-2 4h-4z" fill="#5aa65a"/><path d="M948 1021v11" stroke="#444" stroke-width="2"/>
<rect x="1170" y="1016" width="5" height="6" fill="#bbb"/><path d="M1177 1016l-3 16" stroke="#999" stroke-width="3"/>
<rect x="1216" y="1016" width="13" height="17" fill="#eee" stroke="#333"/><rect x="1216" y="1016" width="13" height="4" fill="#333"/><path d="M1219 1023h7M1219 1026h7M1219 1029h7" stroke="#333"/>
<rect x="1240" y="1016" width="13" height="17" fill="#a8a8a8"/><path d="M1250 1020l-4 4 4 4" stroke="#ddd" fill="none"/>
<g transform="translate(1695,1026)"><circle cx="-3" cy="-4" r="3.500" fill="#e8b830" stroke="#8a6a1e"/><circle cx="4" cy="-4" r="3.500" fill="#e8b830" stroke="#8a6a1e"/><path d="M0-2v11l3-3" stroke="#222" fill="none"/></g>
<g transform="translate(1721,1026)"><path d="M-7 7L2-8V7Z" fill="#bcd" stroke="#2b6fb0"/><path d="M3-9l5 5M8-9l-5 5" stroke="#d22" stroke-width="1.800"/><path d="M3 0v8l3-2" stroke="#222" fill="none"/></g>
<g transform="translate(1744,1026)"><rect x="-6" y="-9" width="8" height="10" fill="#e8b060" stroke="#9a6020"/><path d="M-4-3h4" stroke="#9a6020"/><path d="M1 0v9l3-2" stroke="#222" fill="none"/></g>
<g transform="translate(1768,1026)"><path d="M-6 9V-3L1-8V4Z" fill="#6ea5d8" stroke="#2b6fb0"/><path d="M3-9l5 5M8-9l-5 5" stroke="#d22" stroke-width="1.800"/><path d="M3 0v9l3-2" stroke="#222" fill="none"/></g>
<g transform="translate(1792,1026)"><path d="M-6-5H5M-1-9V2" stroke="#222"/><path d="M1-2v10l3-3h3z" fill="#fff" stroke="#222"/></g>
<circle cx="1815" cy="1026" r="5" fill="none" stroke="#b5b5b5" stroke-width="2.500" stroke-dasharray="2 1"/>
<path d="M1831 1017h16l-6 8v7h-4v-7z" fill="#ddd" stroke="#666"/>
</g>
</svg>

<!-- ===== TEXT ===== -->
<div class="t" style="left:898px;top:3px;color:#444;transform:scaleX(.905)">Autodesk Revit 2020.2 - BuildingTest22 - 3D View: AIW</div>
<div class="t" style="left:1623px;top:5px">jkarian8GLLJ</div>
<div class="c" style="left:25.500px;top:32px;color:#fff">File</div>
<div class="t" style="left:59px;top:32px">Architecture</div>
<div class="t" style="left:142px;top:32px">Structure</div>
<div class="t" style="left:208px;top:32px">Steel</div>
<div class="t" style="left:255px;top:32px">Systems</div>
<div class="t" style="left:317px;top:32px">Insert</div>
<div class="t" style="left:366px;top:32px">Annotate</div>
<div class="t" style="left:434px;top:32px">Analyze</div>
<div class="t" style="left:495px;top:32px">Massing &amp; Site</div>
<div class="t" style="left:593px;top:32px">Collaborate</div>
<div class="t" style="left:675px;top:32px">View</div>
<div class="t" style="left:720px;top:32px">Manage</div>
<div class="t" style="left:782px;top:32px">Add-Ins</div>
<div class="t" style="left:843px;top:32px">Quantification</div>
<div class="t" style="left:937px;top:32px">Site Designer</div>
<div class="t" style="left:1026px;top:32px;transform:scaleX(.94)">BIM Interoperability Tools</div>
<div class="t" style="left:1183px;top:32px">Modify</div>
<div class="t" style="left:1240px;top:32px">Precast</div>

<div class="c" style="left:31px;top:90px">Modify</div>
<div class="c" style="left:84.500px;top:91px">Wall</div>
<div class="c" style="left:126px;top:90px">Door</div>
<div class="c" style="left:170px;top:90px">Window</div>
<div class="c" style="left:237.500px;top:91px">Component</div>
<div class="c" style="left:311px;top:91px">Column</div>
<div class="c" style="left:367px;top:91px">Roof</div>
<div class="c" style="left:412px;top:90px">Ceiling</div>
<div class="c" style="left:459px;top:91px">Floor</div>
<div class="c" style="left:506px;top:90px">Curtain</div><div class="c" style="left:506px;top:106px">System</div>
<div class="c" style="left:549px;top:90px">Curtain</div><div class="c" style="left:549px;top:106px">Grid</div>
<div class="c" style="left:595px;top:90px">Mullion</div>
<div class="c" style="left:652px;top:91px">Railing</div>
<div class="c" style="left:700.500px;top:90px">Ramp</div>
<div class="c" style="left:740px;top:90px">Stair</div>
<div class="c" style="left:784px;top:90px">Model</div><div class="c" style="left:784px;top:106px">Text</div>
<div class="c" style="left:824px;top:90px">Model</div><div class="c" style="left:824px;top:106px">Line</div>
<div class="c" style="left:871px;top:90px">Model</div><div class="c" style="left:871px;top:106px">Group</div>
<div class="c g" style="left:922px;top:90px">Room</div>
<div class="c" style="left:969px;top:90px">Room</div><div class="c" style="left:969px;top:106px">Separator</div>
<div class="c" style="left:1025.500px;top:91px">Tag</div><div class="c" style="left:1025.500px;top:107px">Room</div>
<div class="c" style="left:1074.500px;top:90px">Area</div>
<div class="c g" style="left:1125px;top:90px">Area</div><div class="c g" style="left:1125px;top:106px">Boundary</div>
<div class="c" style="left:1175.500px;top:91px">Tag</div><div class="c" style="left:1175.500px;top:107px">Area</div>
<div class="c" style="left:1222px;top:90px">By</div><div class="c" style="left:1222px;top:106px">Face</div>
<div class="c" style="left:1260px;top:90px">Shaft</div>
<div class="c" style="left:1299.500px;top:90px">Wall</div>
<div class="c" style="left:1341px;top:90px">Vertical</div>
<div class="c" style="left:1387px;top:90px">Dormer</div>
<div class="c g" style="left:1435px;top:90px">Level</div>
<div class="c g" style="left:1473px;top:90px">Grid</div>
<div class="c" style="left:1517px;top:90px">Set</div>
<div class="c" style="left:1556px;top:90px">Show</div>
<div class="c g" style="left:1595px;top:90px">Ref</div><div class="c g" style="left:1595px;top:106px">Plane</div>
<div class="c" style="left:1634.500px;top:90px">Viewer</div>

<div class="t" style="left:9px;top:127px;color:#555">Select</div>
<div class="c" style="left:340px;top:127px;color:#555">Build</div>
<div class="c" style="left:691px;top:127px;color:#555">Circulation</div>
<div class="c" style="left:831px;top:127px;color:#555">Model</div>
<div class="c" style="left:1043px;top:127px;color:#555">Room &amp; Area</div>
<div class="c" style="left:1307px;top:127px;color:#555">Opening</div>
<div class="c" style="left:1454px;top:127px;color:#555">Datum</div>
<div class="c" style="left:1577px;top:127px;color:#555">Work Plane</div>

<div class="t" style="left:6px;top:174px;color:#666">Properties</div>
<div class="t" style="left:527px;top:175px;font-weight:bold">AIW</div>
<div class="t" style="left:77px;top:220px;color:#666">3D View</div>
<div class="t" style="left:7px;top:266px">3D View: AIW</div>
<div class="t" style="left:440px;top:265px">Edit Type</div>
<div class="t" style="left:5px;top:287px">Graphics</div>
<div class="t" style="left:12px;top:305px">View Scale</div><div class="t" style="left:241px;top:305px">1" = 20'-0"</div>
<div class="t g" style="left:12px;top:324px">Scale Value</div><div class="t g" style="left:86px;top:324px">1:</div><div class="t g" style="left:237px;top:324px">240</div>
<div class="t" style="left:12px;top:344px">Detail Level</div><div class="t" style="left:237px;top:344px">Coarse</div>
<div class="t" style="left:12px;top:363px">Parts Visibility</div><div class="t" style="left:237px;top:363px">Show Original</div>
<div class="t" style="left:12px;top:382px">Visibility/Graphics Overrides</div><div class="c" style="left:350px;top:383px">Edit...</div>
<div class="t" style="left:12px;top:401px">Graphic Display Options</div><div class="c" style="left:350px;top:402px">Edit...</div>
<div class="t" style="left:12px;top:420px">Discipline</div><div class="t" style="left:237px;top:420px">Architectural</div>
<div class="t" style="left:12px;top:439px">Show Hidden Lines</div><div class="t" style="left:237px;top:439px">By Discipline</div>
<div class="t" style="left:12px;top:459px;transform:scaleX(.875)">Default Analysis Display Style</div><div class="t" style="left:237px;top:459px">None</div>
<div class="t" style="left:12px;top:478px">Sub-Discipline</div><div class="t" style="left:237px;top:478px">Reference</div>
<div class="t" style="left:12px;top:497px">Sun Path</div>
<div class="t" style="left:6px;top:517px">Extents</div>
<div class="t" style="left:12px;top:535px">Crop View</div>
<div class="clip" style="top:553px;height:12px;width:235px"><div class="t" style="left:12px;top:1px">Crop Region Visible</div></div>
<div class="t" style="left:6px;top:567px;color:#2a7ac8;text-decoration:underline">Properties help</div>
<div class="c" style="left:458px;top:569px;color:#8c8c8c">Apply</div>

<div class="t" style="left:6px;top:595px;color:#666;transform:scaleX(.9)">Project Browser - BuildingTest22</div>
<div class="t" style="left:45px;top:613px">Views (all)</div>
<div class="t" style="left:50px;top:631px">Floor Plans</div>
<div class="t" style="left:71px;top:648px">ar1all</div>
<div class="t" style="left:71px;top:666px">ar2all</div>
<div class="t" style="left:71px;top:683px">Exhibit_ar1_North</div>
<div class="t" style="left:71px;top:701px">Exhibit_ar1all_Working</div>
<div class="t" style="left:71px;top:718px">Exhibit_ar2_North</div>
<div class="t" style="left:71px;top:736px">Exhibit_ar2all_Working</div>
<div class="t" style="left:71px;top:753px">Exhibit_as1all</div>
<div class="t" style="left:71px;top:771px">Site</div>
<div class="t" style="left:50px;top:789px">3D Views</div>
<div class="t" style="left:71px;top:806px;font-weight:bold;color:#222">AIW</div>
<div class="t" style="left:71px;top:824px">AOI1</div>
<div class="t" style="left:71px;top:841px">Only Floors</div>
<div class="t" style="left:71px;top:859px">Stairs-Issues</div>
<div class="t" style="left:71px;top:876px">{3D}</div>
<div class="t" style="left:50px;top:894px">Sections (Section 1)</div>
<div class="t" style="left:71px;top:911px">Section 1</div>
<div class="t" style="left:50px;top:929px;transform:scaleX(.89)">Area Plans (Gross Building)</div>
<div class="t" style="left:45px;top:946px">Legends</div>
<div class="t" style="left:45px;top:964px;transform:scaleX(.93)">Schedules/Quantities (all)</div>
<div class="t" style="left:45px;top:982px">Sheets (all)</div>
<div class="clip" style="top:1000px;height:9px;width:300px"><div class="t" style="left:50px;top:-1px">A102 - Unnamed</div></div>

<div class="t" style="left:4px;top:1018px;transform:scaleX(.875)">Click to select, TAB for alternates, CTRL adds, SHIFT unselects.</div>
<div class="t" style="left:512px;top:993px;color:#222;font-size:12px">1" = 20'-0"</div>
<div class="t" style="left:1187px;top:1018px;color:#222">:0</div>
<div class="t" style="left:1264px;top:1017px;color:#9a9a9a">Main Model</div>
<div class="t" style="left:1850px;top:1018px;color:#222">:0</div>
</div></body></html>
